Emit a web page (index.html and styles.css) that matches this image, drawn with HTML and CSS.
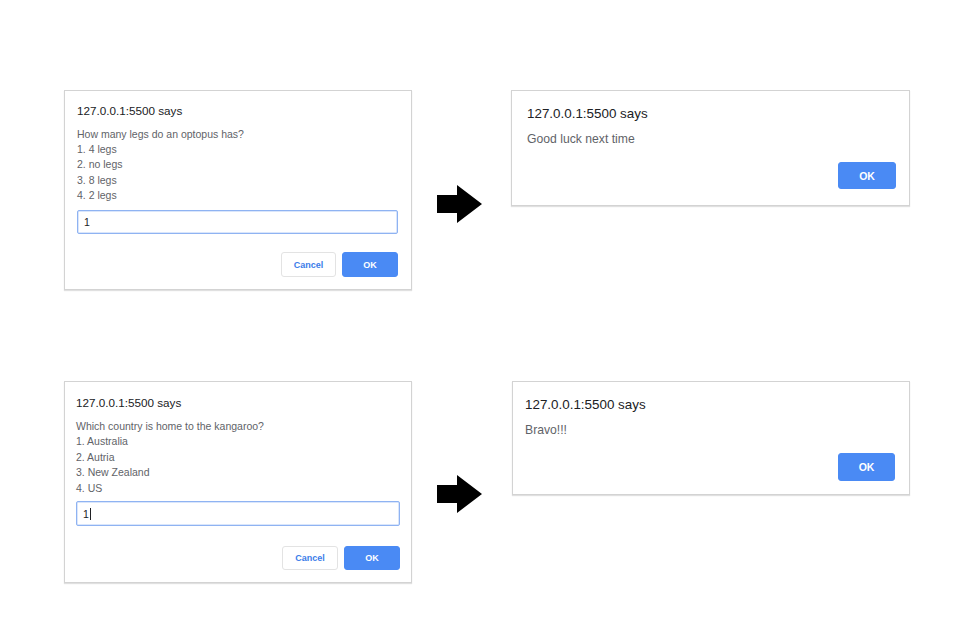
FILE: index.html
```html
<!DOCTYPE html>
<html lang="en">
<head>
<meta charset="utf-8">
<title>Quiz dialogs</title>
<link rel="stylesheet" href="styles.css">
</head>
<body>
<main class="page">
  <section class="row row-1">
    <div class="dialog prompt p1">
      <div class="title">127.0.0.1:5500 says</div>
      <div class="message">
        <div>How many legs do an optopus has?</div>
        <div>1. 4 legs</div>
        <div>2. no legs</div>
        <div>3. 8 legs</div>
        <div>4. 2 legs</div>
      </div>
      <div class="input">1</div>
      <div class="buttons">
        <button class="btn cancel">Cancel</button>
        <button class="btn ok">OK</button>
      </div>
    </div>
    <svg class="arrow" width="45" height="38" viewBox="0 0 45 38" aria-hidden="true">
      <path d="M0 10 H20 V0 L45 19 L20 38 V28 H0 Z" fill="#000"/>
    </svg>
    <div class="dialog alert a1">
      <div class="title">127.0.0.1:5500 says</div>
      <div class="message">Good luck next time</div>
      <div class="buttons">
        <button class="btn ok">OK</button>
      </div>
    </div>
  </section>

  <section class="row row-2">
    <div class="dialog prompt p2">
      <div class="title">127.0.0.1:5500 says</div>
      <div class="message">
        <div>Which country is home to the kangaroo?</div>
        <div>1. Australia</div>
        <div>2. Autria</div>
        <div>3. New Zealand</div>
        <div>4. US</div>
      </div>
      <div class="input">1<span class="caret"></span></div>
      <div class="buttons">
        <button class="btn cancel">Cancel</button>
        <button class="btn ok">OK</button>
      </div>
    </div>
    <svg class="arrow" width="45" height="38" viewBox="0 0 45 38" aria-hidden="true">
      <path d="M0 10 H20 V0 L45 19 L20 38 V28 H0 Z" fill="#000"/>
    </svg>
    <div class="dialog alert a2">
      <div class="title">127.0.0.1:5500 says</div>
      <div class="message">Bravo!!!</div>
      <div class="buttons">
        <button class="btn ok">OK</button>
      </div>
    </div>
  </section>
</main>
</body>
</html>
```

FILE: styles.css
```css
* { box-sizing: border-box; }

html, body {
  margin: 0;
  padding: 0;
  background: #ffffff;
}

body {
  font-family: "Liberation Sans", Arial, sans-serif;
  width: 966px;
  height: 624px;
  overflow: hidden;
}

.page {
  display: flex;
  flex-direction: column;
  padding-top: 90px;
  padding-left: 64px;
  gap: 91px;
}

.row {
  display: flex;
  align-items: flex-start;
}

.arrow {
  display: block;
  flex: none;
  margin-left: 25px;
  margin-right: 29px;
  margin-top: 95px;
}

.row-2 .arrow { margin-top: 94px; margin-right: 30px; }

.dialog {
  background: #ffffff;
  border: 1px solid #d3d3d3;
  box-shadow: 0 1px 1px rgba(0, 0, 0, 0.12);
  display: flex;
  flex-direction: column;
}

.title {
  color: #202124;
  white-space: nowrap;
}

.message {
  color: #5f6368;
  white-space: nowrap;
}

/* prompt dialogs */
.prompt {
  padding: 12px 13px 12px 12px;
}

.p1 { width: 348px; height: 200px; }
.p2 { width: 348px; height: 202px; padding: 13px 11px 12px 11px; }

.prompt .title {
  font-size: 11.7px;
  line-height: 16px;
}

.prompt .message {
  font-size: 10.5px;
  line-height: 15.4px;
  margin-top: 7.5px;
}

.p2 .message { margin-top: 8px; }

.input {
  margin-top: 6px;
  height: 24px;
  border: 1px solid #8fb3f2;
  box-shadow: inset 0 0 0 0.5px #b5cdf7;
  border-radius: 2px;
  padding-left: 6px;
  font-size: 10.5px;
  line-height: 22px;
  color: #202124;
  display: flex;
  align-items: center;
}

.p2 .input { height: 25px; margin-top: 5px; }

.caret {
  display: inline-block;
  width: 1px;
  height: 12px;
  background: #202124;
  margin-left: 1px;
}

.buttons {
  display: flex;
  justify-content: flex-end;
  gap: 6px;
}

.prompt .buttons { margin-top: 18.5px; }
.p2 .buttons { margin-top: 20px; }

.btn {
  font-family: "Liberation Sans", Arial, sans-serif;
  font-weight: bold;
  border-radius: 3px;
  padding: 0;
  margin: 0;
  cursor: default;
}

.prompt .btn {
  height: 25px;
  font-size: 9px;
}

.p2 .btn { height: 24px; }

.cancel {
  width: 55px;
  background: #ffffff;
  border: 1px solid #e3e3e3;
  color: #3b7de9;
}

.p2 .cancel { width: 56px; }

.ok {
  width: 56px;
  background: #4a8af4;
  border: 1px solid #4a8af4;
  color: #ffffff;
}

/* alert dialogs */
.alert {
  padding: 14px 13px 15px 15px;
}

.a1 { width: 399px; height: 116px; }
.a2 { width: 398px; height: 114px; padding-left: 12px; padding-right: 14px; }

.alert .title {
  font-size: 13.4px;
  line-height: 18px;
}

.alert .message {
  font-size: 12.2px;
  line-height: 16px;
  margin-top: 8px;
}

.alert .buttons { margin-top: 15px; }

.alert .ok {
  width: 58px;
  height: 27px;
  font-size: 10.5px;
}

.a2 .ok { width: 57px; height: 28px; }
```
